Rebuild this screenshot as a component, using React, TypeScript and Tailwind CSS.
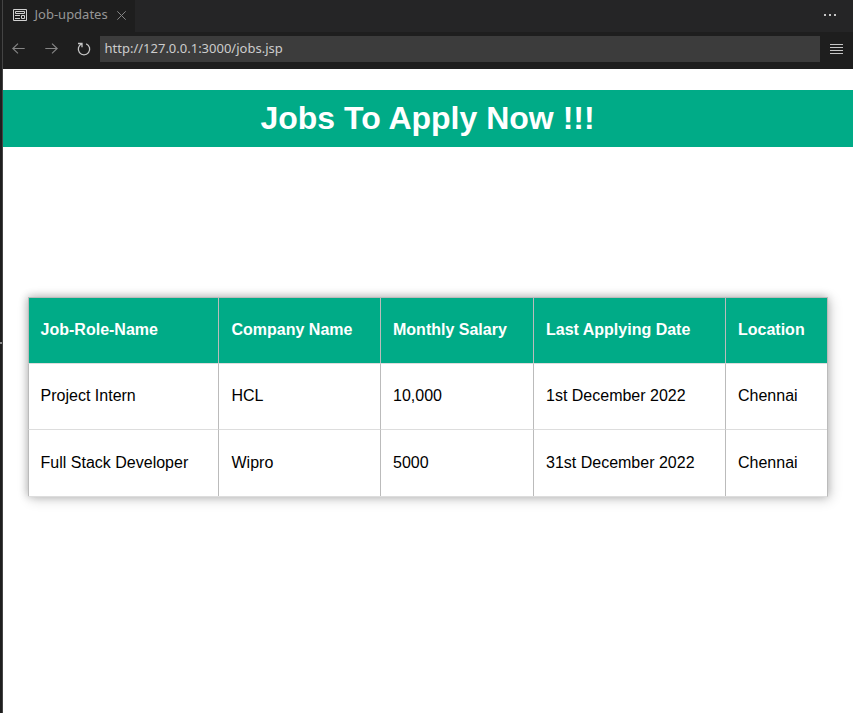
import React from 'react';

const jobs: string[][] = [
  ['Project Intern', 'HCL', '10,000', '1st December 2022', 'Chennai'],
  ['Full Stack Developer', 'Wipro', '5000', '31st December 2022', 'Chennai'],
];

const headings = ['Job-Role-Name', 'Company Name', 'Monthly Salary', 'Last Applying Date', 'Location'];

const cellPadding = 'px-3 first:pl-[11.6px] nth-2:pl-[12.5px]';

function PreviewIcon() {
  return (
    <svg className="h-[14px] w-[16px] shrink-0" viewBox="0 0 16 14" fill="none" stroke="#d0d0d0">
      <path d="M1.5 1.5h13v11h-13z M3.5 3.5h9v2h-9z M3 7.5h5 M3 10.5h5 M9.5 7.5h3v3h-3z" />
    </svg>
  );
}

function Arrow({ flip = false }: { flip?: boolean }) {
  return (
    <svg className={flip ? 'h-3 w-[13px] -scale-x-100' : 'h-3 w-[13px]'} viewBox="0 0 13 12" fill="none" stroke="#858585" strokeWidth="1.15">
      <path d="M6 .7.8 5.5 6 10.3M.8 5.5h11.9" />
    </svg>
  );
}

function ReloadIcon() {
  return (
    <svg className="h-[14px] w-[14px]" viewBox="0 0 14 14" fill="none" stroke="#c5c5c5" strokeWidth="1.3">
      <path d="M1 1.5h4v3.7 M4.8 1.9A5.7 5.7 0 1 0 9.2 1.9" />
    </svg>
  );
}

function BrowserChrome() {
  return (
    <header className="h-[69px] bg-[#1e1e1e] font-['Noto_Sans',sans-serif]">
      <div className="flex h-8 justify-between bg-[#252526]">
        <div className="flex w-[132px] items-center bg-[#1e1e1e] pb-[2px] pl-[9px]">
          <PreviewIcon />
          <span className="ml-[6.5px] w-[74px] whitespace-nowrap pb-[2px] text-[13px] leading-[14px] text-[#969696]">Job-updates</span>
          <svg className="ml-[8.5px] h-[9px] w-[9px]" viewBox="0 0 9 9" stroke="#858585">
            <path d="m.3.3 8.4 8.4M8.7.3.3 8.7" />
          </svg>
        </div>
        <div className="flex items-center gap-[3px] pb-[2px] pr-[17px]">
          <i className="h-[2px] w-[2px] bg-[#c5c5c5]" />
          <i className="h-[2px] w-[2px] bg-[#c5c5c5]" />
          <i className="h-[2px] w-[2px] bg-[#c5c5c5]" />
        </div>
      </div>
      <nav className="flex h-[34px] items-center">
        <div className="flex w-[97px] items-center pl-[8.5px]">
          <Arrow />
          <span className="w-5" />
          <Arrow flip />
          <span className="w-[19px]" />
          <ReloadIcon />
        </div>
        <div className="flex h-[26px] w-[720px] items-center bg-[#3c3c3c] pl-[4.5px] text-[13px] text-[#cccccc]">
          http://127.0.0.1:3000/jobs.jsp
        </div>
        <div className="ml-[10px] flex w-[13px] flex-col gap-[2px]">
          <i className="h-px bg-[#c5c5c5]" />
          <i className="h-px bg-[#c5c5c5]" />
          <i className="h-px bg-[#c5c5c5]" />
          <i className="h-px bg-[#c5c5c5]" />
        </div>
      </nav>
    </header>
  );
}

function JobsTable() {
  return (
    <table className="ml-[25px] mt-[150px] w-[800px] table-fixed border-separate border-spacing-0 border-b border-r border-b-[#dddddd] border-r-[#bbbbbb] bg-white text-left text-[16px] leading-[18px] shadow-[2px_2px_12px_rgba(0,0,0,0.2),-1px_-1px_8px_rgba(0,0,0,0.2)]">
      <colgroup>
        <col className="w-[190px]" />
        <col className="w-[162px]" />
        <col className="w-[153px]" />
        <col className="w-[192px]" />
        <col className="w-[102px]" />
      </colgroup>
      <thead>
        <tr className="h-[66px] bg-[#00ab87] text-white">
          {headings.map((heading) => (
            <th key={heading} className={`border-l border-t border-l-[#bbbbbb] border-t-[#bbbbbb] pb-[2px] pt-0 font-bold ${cellPadding}`}>{heading}</th>
          ))}
        </tr>
      </thead>
      <tbody>
        {jobs.map((job, row) => (
          <tr key={job[0]} className="h-[66px] last:h-[67px]">
            {job.map((value, index) => (
              <td key={index} className={`border-l border-t border-l-[#bbbbbb] border-t-[#dddddd] pt-0 ${row === 0 ? 'pb-[2px]' : 'pb-0'} ${cellPadding}`}>{value}</td>
            ))}
          </tr>
        ))}
      </tbody>
    </table>
  );
}

export default function App() {
  return (
    <div className="flex h-[713px] w-[853px] overflow-hidden bg-white font-['Liberation_Sans',Arial,sans-serif] text-black">
      <aside className="flex w-[3px] shrink-0 flex-col border-r border-[#444444] bg-[#1e1e1e] pt-[342px]">
        <span className="h-[2px] bg-[#8b8b8b]" />
      </aside>
      <div className="min-w-0 flex-1">
        <BrowserChrome />
        <main className="pt-[21px]">
          <h1 className="h-[57px] bg-[#00ab87] pr-px text-center text-[32px] font-bold leading-[57px] text-white">Jobs To Apply Now !!!</h1>
          <JobsTable />
        </main>
      </div>
    </div>
  );
}
